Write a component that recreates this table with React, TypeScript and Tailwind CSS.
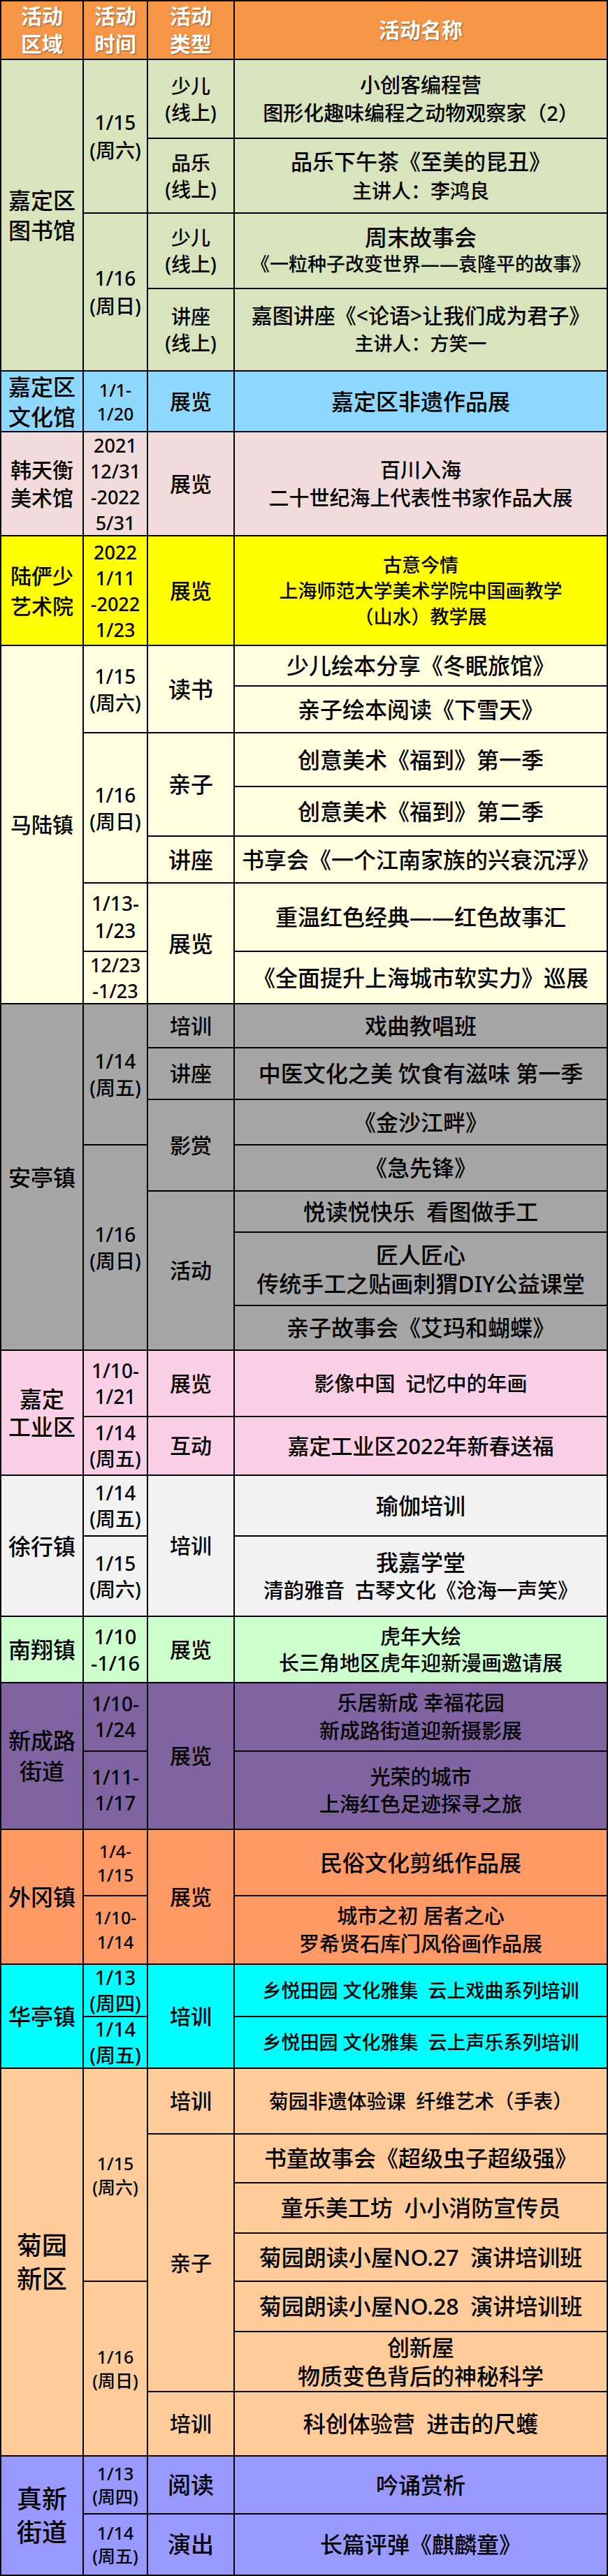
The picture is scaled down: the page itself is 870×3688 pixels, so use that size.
import React from "react";

const COL: Record<number, string> = {
  1: "col-start-1",
  2: "col-start-2",
  3: "col-start-3",
  4: "col-start-4",
};

const SPAN: Record<number, string> = {
  1: "row-span-1",
  2: "row-span-2",
  3: "row-span-3",
  4: "row-span-4",
  5: "row-span-5",
  7: "row-span-7",
};

type CellProps = {
  col: number;
  span?: number;
  bg: string;
  className?: string;
  children: React.ReactNode;
};

function Cell({ col, span = 1, bg, className = "", children }: CellProps) {
  return (
    <div
      className={`${COL[col]} ${SPAN[span]} ${bg} flex flex-col items-center justify-center text-center text-black whitespace-pre ${className}`}
    >
      {children}
    </div>
  );
}

function Two({
  a,
  b,
  aCls,
  bCls,
}: {
  a: string;
  b: string;
  aCls: string;
  bCls: string;
}) {
  return (
    <>
      <span className={`block ${aCls}`}>{a}</span>
      <span className={`block ${bCls}`}>{b}</span>
    </>
  );
}

const H = "bg-[#F79646] text-white font-bold text-[30px] leading-[40px] [text-shadow:1px_1px_2px_rgba(0,0,0,0.45)]";

export default function App() {
  const g1 = "bg-[#D8E4BC]";
  const g2 = "bg-[#8ED8FD]";
  const g3 = "bg-[#F2DCDB]";
  const g4 = "bg-[#FFFF00]";
  const g5 = "bg-[#FFFFE0]";
  const g6 = "bg-[#A6A6A6]";
  const g7 = "bg-[#FBD0E6]";
  const g8 = "bg-[#F2F2F2]";
  const g9 = "bg-[#CCFFCC]";
  const g10 = "bg-[#8064A2]";
  const g11 = "bg-[#FF9966]";
  const g12 = "bg-[#00FFFF]";
  const g13 = "bg-[#FFCC99]";
  const g14 = "bg-[#9999FF]";

  const region = "text-[32px] leading-[43px]";
  const date = "text-[28px] leading-[38px]";
  const type = "text-[30px] leading-[40px]";
  const main = "text-[32px] leading-[40px]";

  return (
    <div className="w-[870px] bg-white">
      <div className="grid w-[870px] bg-black p-[2px] gap-[2px] grid-cols-[116px_90px_122px_1fr] grid-rows-[82px_111px_105px_106px_116px_85px_147px_155px_56px_65px_75px_69px_65px_96px_73px_61px_72px_63px_64px_57px_103px_62px_93px_82px_85px_113px_93px_96px_110px_93px_96px_73px_72px_92px_68px_70px_67px_70px_84px_90px_81px_86px] font-medium font-['Noto_Sans','Noto_Sans_CJK_SC',sans-serif]">
        {/* Header */}
        <Cell col={1} bg={H}>{"活动\n区域"}</Cell>
        <Cell col={2} bg={H}>{"活动\n时间"}</Cell>
        <Cell col={3} bg={H}>{"活动\n类型"}</Cell>
        <Cell col={4} bg={H}>{"活动名称"}</Cell>

        {/* 嘉定区图书馆 */}
        <Cell col={1} span={4} bg={g1} className={region}>{"嘉定区\n图书馆"}</Cell>
        <Cell col={2} span={2} bg={g1} className="text-[28px] leading-[40px]">{"1/15\n(周六)"}</Cell>
        <Cell col={3} bg={g1} className="text-[28px] leading-[38px]">{"少儿\n(线上)"}</Cell>
        <Cell col={4} bg={g1} className="text-[29px] leading-[40px]">{"小创客编程营\n图形化趣味编程之动物观察家（2）"}</Cell>
        <Cell col={3} bg={g1} className="text-[28px] leading-[38px]">{"品乐\n(线上)"}</Cell>
        <Cell col={4} bg={g1} className="leading-[42px]">
          <Two a="品乐下午茶《至美的昆丑》" b="主讲人：李鸿良" aCls="text-[31px]" bCls="text-[28px]" />
        </Cell>
        <Cell col={2} span={2} bg={g1} className="text-[28px] leading-[40px]">{"1/16\n(周日)"}</Cell>
        <Cell col={3} bg={g1} className="text-[28px] leading-[38px]">{"少儿\n(线上)"}</Cell>
        <Cell col={4} bg={g1} className="leading-[38px]">
          <Two a="周末故事会" b="《一粒种子改变世界——袁隆平的故事》" aCls="text-[32px]" bCls="text-[27px]" />
        </Cell>
        <Cell col={3} bg={g1} className="text-[28px] leading-[38px]">{"讲座\n(线上)"}</Cell>
        <Cell col={4} bg={g1} className="leading-[40px]">
          <Two a="嘉图讲座《<论语>让我们成为君子》" b="主讲人：方笑一" aCls="text-[30px]" bCls="text-[27px]" />
        </Cell>

        {/* 嘉定区文化馆 */}
        <Cell col={1} bg={g2} className="text-[32px] leading-[43px]">{"嘉定区\n文化馆"}</Cell>
        <Cell col={2} bg={g2} className="text-[25px] leading-[34px]">{"1/1-\n1/20"}</Cell>
        <Cell col={3} bg={g2} className={type}>{"展览"}</Cell>
        <Cell col={4} bg={g2} className={main}>{"嘉定区非遗作品展"}</Cell>

        {/* 韩天衡美术馆 */}
        <Cell col={1} bg={g3} className="text-[30px] leading-[40px]">{"韩天衡\n美术馆"}</Cell>
        <Cell col={2} bg={g3} className="text-[27px] leading-[37px]">{"2021\n12/31\n-2022\n5/31"}</Cell>
        <Cell col={3} bg={g3} className={type}>{"展览"}</Cell>
        <Cell col={4} bg={g3} className="text-[29px] leading-[40px]">{"百川入海\n二十世纪海上代表性书家作品大展"}</Cell>

        {/* 陆俨少艺术院 */}
        <Cell col={1} bg={g4} className="text-[30px] leading-[43px]">{"陆俨少\n艺术院"}</Cell>
        <Cell col={2} bg={g4} className="text-[27px] leading-[37px]">{"2022\n1/11\n-2022\n1/23"}</Cell>
        <Cell col={3} bg={g4} className={type}>{"展览"}</Cell>
        <Cell col={4} bg={g4} className="text-[27px] leading-[37px]">{"古意今情\n上海师范大学美术学院中国画教学\n（山水）教学展"}</Cell>

        {/* 马陆镇 */}
        <Cell col={1} span={7} bg={g5} className="text-[30px] leading-[40px]">{"马陆镇"}</Cell>
        <Cell col={2} span={2} bg={g5} className={date}>{"1/15\n(周六)"}</Cell>
        <Cell col={3} span={2} bg={g5} className="text-[32px] leading-[40px]">{"读书"}</Cell>
        <Cell col={4} bg={g5} className={main}>{"少儿绘本分享《冬眠旅馆》"}</Cell>
        <Cell col={4} bg={g5} className={main}>{"亲子绘本阅读《下雪天》"}</Cell>
        <Cell col={2} span={3} bg={g5} className={date}>{"1/16\n(周日)"}</Cell>
        <Cell col={3} span={2} bg={g5} className="text-[32px] leading-[40px]">{"亲子"}</Cell>
        <Cell col={4} bg={g5} className={main}>{"创意美术《福到》第一季"}</Cell>
        <Cell col={4} bg={g5} className={main}>{"创意美术《福到》第二季"}</Cell>
        <Cell col={3} bg={g5} className="text-[32px] leading-[40px]">{"讲座"}</Cell>
        <Cell col={4} bg={g5} className={main}>{"书享会《一个江南家族的兴衰沉浮》"}</Cell>
        <Cell col={2} bg={g5} className="text-[28px] leading-[39px]">{"1/13-\n1/23"}</Cell>
        <Cell col={3} span={2} bg={g5} className="text-[32px] leading-[40px]">{"展览"}</Cell>
        <Cell col={4} bg={g5} className={main}>{"重温红色经典——红色故事汇"}</Cell>
        <Cell col={2} bg={g5} className="text-[27px] leading-[37px]">{"12/23\n-1/23"}</Cell>
        <Cell col={4} bg={g5} className={main}>{"《全面提升上海城市软实力》巡展"}</Cell>

        {/* 安亭镇 */}
        <Cell col={1} span={7} bg={g6} className={region}>{"安亭镇"}</Cell>
        <Cell col={2} span={3} bg={g6} className={date}>{"1/14\n(周五)"}</Cell>
        <Cell col={3} bg={g6} className={type}>{"培训"}</Cell>
        <Cell col={4} bg={g6} className={main}>{"戏曲教唱班"}</Cell>
        <Cell col={3} bg={g6} className={type}>{"讲座"}</Cell>
        <Cell col={4} bg={g6} className={main}>{"中医文化之美 饮食有滋味 第一季"}</Cell>
        <Cell col={3} span={2} bg={g6} className={type}>{"影赏"}</Cell>
        <Cell col={4} bg={g6} className={main}>{"《金沙江畔》"}</Cell>
        <Cell col={2} span={4} bg={g6} className={date}>{"1/16\n(周日)"}</Cell>
        <Cell col={4} bg={g6} className={main}>{"《急先锋》"}</Cell>
        <Cell col={3} span={3} bg={g6} className={type}>{"活动"}</Cell>
        <Cell col={4} bg={g6} className={main}>{"悦读悦快乐  看图做手工"}</Cell>
        <Cell col={4} bg={g6} className="text-[32px] leading-[41px]">{"匠人匠心\n传统手工之贴画刺猬DIY公益课堂"}</Cell>
        <Cell col={4} bg={g6} className={main}>{"亲子故事会《艾玛和蝴蝶》"}</Cell>

        {/* 嘉定工业区 */}
        <Cell col={1} span={2} bg={g7} className="text-[32px] leading-[40px]">{"嘉定\n工业区"}</Cell>
        <Cell col={2} bg={g7} className="text-[28px] leading-[37px]">{"1/10-\n1/21"}</Cell>
        <Cell col={3} bg={g7} className={type}>{"展览"}</Cell>
        <Cell col={4} bg={g7} className="text-[29px] leading-[40px]">{"影像中国  记忆中的年画"}</Cell>
        <Cell col={2} bg={g7} className="text-[28px] leading-[37px]">{"1/14\n(周五)"}</Cell>
        <Cell col={3} bg={g7} className={type}>{"互动"}</Cell>
        <Cell col={4} bg={g7} className="text-[31px] leading-[40px]">{"嘉定工业区2022年新春送福"}</Cell>

        {/* 徐行镇 */}
        <Cell col={1} span={2} bg={g8} className={region}>{"徐行镇"}</Cell>
        <Cell col={2} bg={g8} className="text-[28px] leading-[37px]">{"1/14\n(周五)"}</Cell>
        <Cell col={3} span={2} bg={g8} className={type}>{"培训"}</Cell>
        <Cell col={4} bg={g8} className={main}>{"瑜伽培训"}</Cell>
        <Cell col={2} bg={g8} className="text-[28px] leading-[37px]">{"1/15\n(周六)"}</Cell>
        <Cell col={4} bg={g8} className="leading-[40px]">
          <Two a="我嘉学堂" b="清韵雅音  古琴文化《沧海一声笑》" aCls="text-[32px]" bCls="text-[29px]" />
        </Cell>

        {/* 南翔镇 */}
        <Cell col={1} bg={g9} className={region}>{"南翔镇"}</Cell>
        <Cell col={2} bg={g9} className="text-[29px] leading-[38px]">{"1/10\n-1/16"}</Cell>
        <Cell col={3} bg={g9} className={type}>{"展览"}</Cell>
        <Cell col={4} bg={g9} className="text-[29px] leading-[38px]">{"虎年大绘\n长三角地区虎年迎新漫画邀请展"}</Cell>

        {/* 新成路街道 */}
        <Cell col={1} span={2} bg={g10} className="text-[32px] leading-[44px]">{"新成路\n街道"}</Cell>
        <Cell col={2} bg={g10} className="text-[28px] leading-[37px]">{"1/10-\n1/24"}</Cell>
        <Cell col={3} span={2} bg={g10} className={type}>{"展览"}</Cell>
        <Cell col={4} bg={g10} className="text-[29px] leading-[40px]">{"乐居新成 幸福花园\n新成路街道迎新摄影展"}</Cell>
        <Cell col={2} bg={g10} className="text-[28px] leading-[37px]">{"1/11-\n1/17"}</Cell>
        <Cell col={4} bg={g10} className="text-[29px] leading-[39px]">{"光荣的城市\n上海红色足迹探寻之旅"}</Cell>

        {/* 外冈镇 */}
        <Cell col={1} span={2} bg={g11} className={region}>{"外冈镇"}</Cell>
        <Cell col={2} bg={g11} className="text-[25px] leading-[34px]">{"1/4-\n1/15"}</Cell>
        <Cell col={3} span={2} bg={g11} className={type}>{"展览"}</Cell>
        <Cell col={4} bg={g11} className={main}>{"民俗文化剪纸作品展"}</Cell>
        <Cell col={2} bg={g11} className="text-[25px] leading-[35px]">{"1/10-\n1/14"}</Cell>
        <Cell col={4} bg={g11} className="text-[29px] leading-[40px]">{"城市之初 居者之心\n罗希贤石库门风俗画作品展"}</Cell>

        {/* 华亭镇 */}
        <Cell col={1} span={2} bg={g12} className={region}>{"华亭镇"}</Cell>
        <Cell col={2} bg={g12} className="text-[28px] leading-[37px]">{"1/13\n(周四)"}</Cell>
        <Cell col={3} span={2} bg={g12} className={type}>{"培训"}</Cell>
        <Cell col={4} bg={g12} className="text-[27px] leading-[40px]">{"乡悦田园 文化雅集  云上戏曲系列培训"}</Cell>
        <Cell col={2} bg={g12} className="text-[28px] leading-[37px]">{"1/14\n(周五)"}</Cell>
        <Cell col={4} bg={g12} className="text-[27px] leading-[40px]">{"乡悦田园 文化雅集  云上声乐系列培训"}</Cell>

        {/* 菊园新区 */}
        <Cell col={1} span={7} bg={g13} className="text-[36px] leading-[48px]">{"菊园\n新区"}</Cell>
        <Cell col={2} span={4} bg={g13} className="text-[25px] leading-[34px]">{"1/15\n(周六)"}</Cell>
        <Cell col={3} bg={g13} className={type}>{"培训"}</Cell>
        <Cell col={4} bg={g13} className="text-[28px] leading-[40px]">{"菊园非遗体验课  纤维艺术（手表）"}</Cell>
        <Cell col={3} span={5} bg={g13} className={type}>{"亲子"}</Cell>
        <Cell col={4} bg={g13} className={main}>{"书童故事会《超级虫子超级强》"}</Cell>
        <Cell col={4} bg={g13} className={main}>{"童乐美工坊  小小消防宣传员"}</Cell>
        <Cell col={4} bg={g13} className={main}>{"菊园朗读小屋NO.27  演讲培训班"}</Cell>
        <Cell col={2} span={3} bg={g13} className="text-[25px] leading-[34px]">{"1/16\n(周日)"}</Cell>
        <Cell col={4} bg={g13} className={main}>{"菊园朗读小屋NO.28  演讲培训班"}</Cell>
        <Cell col={4} bg={g13} className="text-[32px] leading-[41px]">{"创新屋\n物质变色背后的神秘科学"}</Cell>
        <Cell col={3} bg={g13} className={type}>{"培训"}</Cell>
        <Cell col={4} bg={g13} className={main}>{"科创体验营  进击的尺蠖"}</Cell>

        {/* 真新街道 */}
        <Cell col={1} span={2} bg={g14} className="text-[36px] leading-[48px]">{"真新\n街道"}</Cell>
        <Cell col={2} bg={g14} className="text-[25px] leading-[33px]">{"1/13\n(周四)"}</Cell>
        <Cell col={3} bg={g14} className="text-[33px] leading-[40px]">{"阅读"}</Cell>
        <Cell col={4} bg={g14} className={main}>{"吟诵赏析"}</Cell>
        <Cell col={2} bg={g14} className="text-[25px] leading-[33px]">{"1/14\n(周五)"}</Cell>
        <Cell col={3} bg={g14} className="text-[33px] leading-[40px]">{"演出"}</Cell>
        <Cell col={4} bg={g14} className={main}>{"长篇评弹《麒麟童》"}</Cell>
      </div>
    </div>
  );
}
